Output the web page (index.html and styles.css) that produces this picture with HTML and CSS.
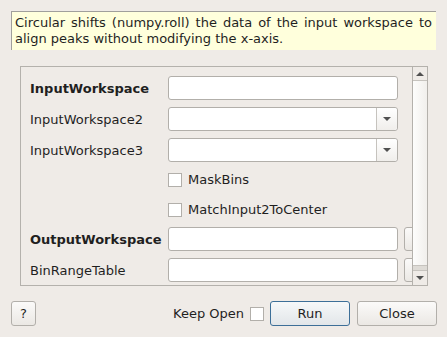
FILE: index.html
```html
<!DOCTYPE html>
<html lang="en">
<head>
    <meta charset="UTF-8">
    <meta name="viewport" content="width=device-width, initial-scale=1.0">
    <title>AlignPeaks</title>
    <link rel="stylesheet" href="styles.css">
</head>
<body>

    <div class="dialog">
        <div class="description">
            Circular shifts (numpy.roll) the data of the input workspace to align peaks without modifying the x-axis.
        </div>

        <div class="scroll-area">
            <div class="viewport">
                <div class="form">
                    <div class="row">
                        <label class="label required">InputWorkspace</label>
                        <div class="field"></div>
                    </div>
                    <div class="row">
                        <label class="label">InputWorkspace2</label>
                        <div class="field combo"><span class="combo-btn"><span class="arrow-down"></span></span></div>
                    </div>
                    <div class="row">
                        <label class="label">InputWorkspace3</label>
                        <div class="field combo"><span class="combo-btn"><span class="arrow-down"></span></span></div>
                    </div>
                    <div class="row check-row">
                        <span class="label"></span>
                        <span class="checkbox"></span>
                        <span class="check-text">MaskBins</span>
                    </div>
                    <div class="row check-row second">
                        <span class="label"></span>
                        <span class="checkbox"></span>
                        <span class="check-text">MatchInput2ToCenter</span>
                    </div>
                    <div class="row">
                        <label class="label required">OutputWorkspace</label>
                        <div class="field"></div>
                        <span class="browse-btn"></span>
                    </div>
                    <div class="row">
                        <label class="label">BinRangeTable</label>
                        <div class="field"></div>
                        <span class="browse-btn"></span>
                    </div>
                </div>
            </div>
            <div class="scrollbar">
                <span class="sb-arrow up"><span class="arrow-up"></span></span>
                <span class="sb-handle"></span>
                <span class="sb-track"></span>
                <span class="sb-arrow down"><span class="arrow-down"></span></span>
            </div>
        </div>

        <div class="buttons">
            <button class="btn help-btn">?</button>
            <span class="spacer"></span>
            <span class="keep-open">Keep Open</span>
            <span class="checkbox"></span>
            <button class="btn run-btn">Run</button>
            <button class="btn close-btn">Close</button>
        </div>
    </div>

</body>
</html>
```

FILE: styles.css
```css
body {
    font-family: "DejaVu Sans", Verdana, sans-serif;
    font-size: 13px;
    color: #1f1f1f;
    background-color: #efebe7;
    margin: 0;
}

.dialog {
    padding: 11px 11px 0 11px;
}

.description {
    height: 35px;
    background: #ffffdc;
    border-top: 1px solid #a09f9c;
    border-left: 1px solid #a09f9c;
    padding: 3px 4px 0 3px;
    line-height: 16px;
    text-align: justify;
}

.scroll-area {
    display: flex;
    height: 218px;
    margin: 16px 8px 0 9px;
    border: 1px solid #b4b1ac;
}

.viewport {
    flex: 1;
    overflow: hidden;
}

.form {
    display: flex;
    flex-direction: column;
    gap: 7px;
    padding: 9px 0 0 9px;
}

.row {
    display: flex;
    align-items: center;
    height: 24px;
    flex-shrink: 0;
}

.label {
    width: 138px;
    flex-shrink: 0;
}

.required {
    font-weight: bold;
}

.field {
    position: relative;
    width: 228px;
    height: 22px;
    flex-shrink: 0;
    background: #fff;
    border: 1px solid #b2afaa;
    border-radius: 3px;
}

.combo-btn {
    position: absolute;
    top: 0;
    right: 0;
    width: 20px;
    height: 22px;
    border-left: 1px solid #c6c3be;
    background: linear-gradient(#ffffff, #f0eeeb);
    border-radius: 0 3px 3px 0;
    display: flex;
    align-items: center;
    justify-content: center;
}

.arrow-down {
    width: 0;
    height: 0;
    border-left: 4px solid transparent;
    border-right: 4px solid transparent;
    border-top: 4px solid #505050;
}

.arrow-up {
    width: 0;
    height: 0;
    border-left: 4px solid transparent;
    border-right: 4px solid transparent;
    border-bottom: 4px solid #505050;
}

.browse-btn {
    width: 30px;
    height: 22px;
    flex-shrink: 0;
    margin-left: 6px;
    border: 1px solid #b2afaa;
    border-radius: 3px;
    background: linear-gradient(#fbfaf9, #ebe8e4);
}

.check-row {
    height: 21px;
}

.check-row.second {
    margin-top: 2px;
}

.checkbox {
    width: 12px;
    height: 12px;
    flex-shrink: 0;
    background: #fff;
    border: 1px solid #b2afaa;
}

.check-text {
    margin-left: 6px;
}

.scrollbar {
    width: 14px;
    display: flex;
    flex-direction: column;
    border-left: 1px solid #b4b1ac;
}

.sb-arrow {
    height: 13px;
    display: flex;
    align-items: center;
    justify-content: center;
    background: #efebe7;
}

.sb-arrow.up {
    border-bottom: 1px solid #c6c3be;
}

.sb-handle {
    flex: 1;
    background: linear-gradient(to right, #fdfdfc, #f1efec);
}

.sb-track {
    height: 4px;
    background: #dedbd6;
    border-top: 1px solid #c6c3be;
}

.sb-arrow.down {
    height: 14px;
    border-top: 1px solid #c6c3be;
}

.buttons {
    display: flex;
    align-items: center;
    margin: 15px -1px 0 0;
}

.btn {
    font-family: "DejaVu Sans", Verdana, sans-serif;
    font-size: 13px;
    color: #1f1f1f;
    height: 25px;
    border: 1px solid #b2afaa;
    border-radius: 3px;
    background: linear-gradient(#fbfaf9, #ebe8e4);
    padding: 0;
}

.help-btn {
    width: 25px;
}

.spacer {
    flex: 1;
}

.keep-open {
    margin-right: 6px;
}

.buttons .checkbox {
    margin-right: 6px;
}

.run-btn {
    width: 80px;
    border-color: #3d6f98;
    background: linear-gradient(#f6f8f9, #e2e6e9);
}

.close-btn {
    width: 80px;
    margin-left: 7px;
}
```
